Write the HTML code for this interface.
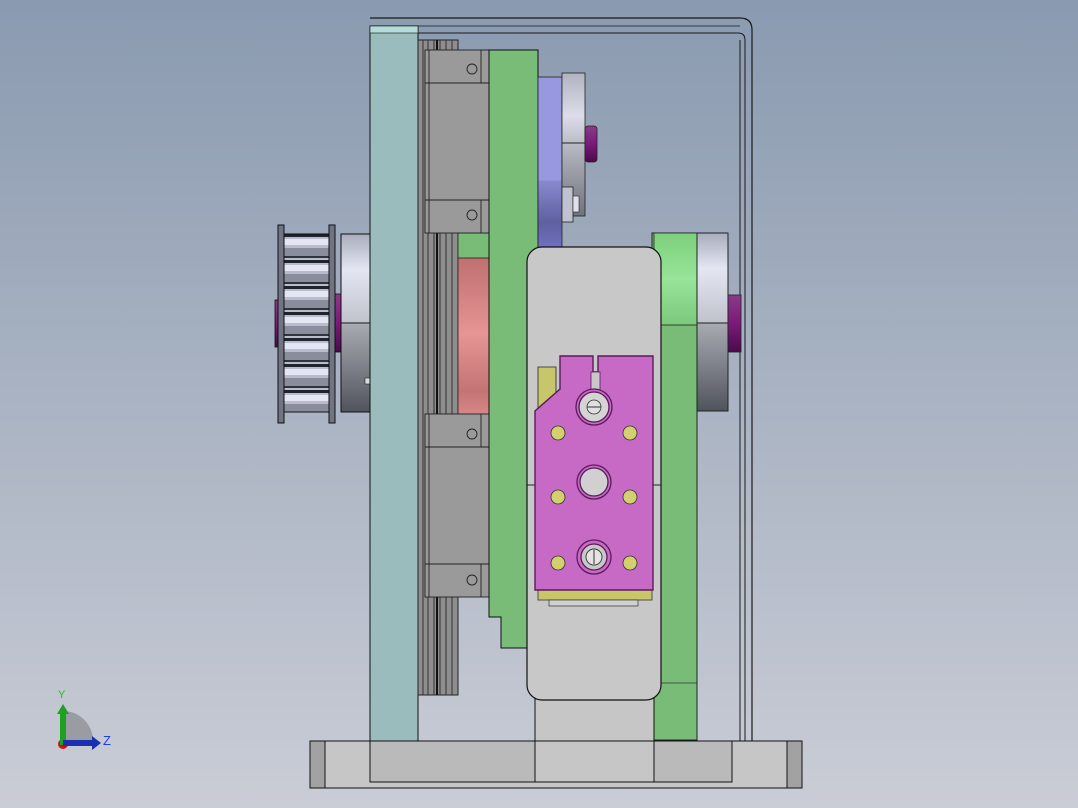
<!DOCTYPE html>
<html><head><style>html,body{margin:0;padding:0;width:1078px;height:808px;overflow:hidden}</style></head>
<body>
<svg width="1078" height="808" viewBox="0 0 1078 808" xmlns="http://www.w3.org/2000/svg" font-family="Liberation Sans, sans-serif">
<defs>
<linearGradient id="bg" x1="0" y1="0" x2="0" y2="1"><stop offset="0" stop-color="#8a9ab0"/><stop offset="1" stop-color="#cacdd6"/></linearGradient>
<linearGradient id="silv" x1="0" y1="0" x2="0" y2="1"><stop offset="0" stop-color="#a8acbc"/><stop offset="0.2" stop-color="#e4e6f2"/><stop offset="0.5" stop-color="#c0c2cc"/><stop offset="0.51" stop-color="#a8aab2"/><stop offset="1" stop-color="#50545c"/></linearGradient>
<linearGradient id="silv2" x1="0" y1="0" x2="0" y2="1"><stop offset="0" stop-color="#b0b2c0"/><stop offset="0.3" stop-color="#dcdde8"/><stop offset="0.6" stop-color="#a8aab4"/><stop offset="1" stop-color="#70747c"/></linearGradient>
<linearGradient id="red" x1="0" y1="0" x2="0" y2="1"><stop offset="0" stop-color="#c07070"/><stop offset="0.4" stop-color="#e69494"/><stop offset="0.7" stop-color="#c47474"/><stop offset="0.9" stop-color="#e49292"/><stop offset="0.92" stop-color="#9e6060"/><stop offset="1" stop-color="#9e6060"/></linearGradient>
<linearGradient id="blue" x1="0" y1="0" x2="0" y2="1"><stop offset="0" stop-color="#9898e0"/><stop offset="0.6" stop-color="#9898e0"/><stop offset="0.61" stop-color="#8888d0"/><stop offset="0.85" stop-color="#5e60a0"/><stop offset="1" stop-color="#7070c0"/></linearGradient>
<linearGradient id="purp" x1="0" y1="0" x2="0" y2="1"><stop offset="0" stop-color="#8a3a8a"/><stop offset="0.5" stop-color="#7a1a7a"/><stop offset="1" stop-color="#4a0a4a"/></linearGradient>
<linearGradient id="lgreen" x1="0" y1="0" x2="0" y2="1"><stop offset="0" stop-color="#7cd07c"/><stop offset="0.5" stop-color="#98e498"/><stop offset="1" stop-color="#7cc87c"/></linearGradient>
<pattern id="teeth" width="10" height="26" patternUnits="userSpaceOnUse" y="234"><rect width="10" height="26" fill="#b8bccc"/><rect y="0" width="10" height="3" fill="#20242c"/><rect y="5" width="10" height="6" fill="#e4e6f4"/><rect y="14" width="10" height="8" fill="#8a8e9c"/><rect y="22" width="10" height="2" fill="#30343c"/></pattern>
</defs>
<rect width="1078" height="808" fill="url(#bg)"/>
<!-- enclosure -->
<path d="M370 18 H740 Q752 18 752 30 V742" fill="none" stroke="#1a1a1a" stroke-width="1.2"/>
<path d="M370 33 H738 Q745 33 745 40 V742" fill="none" stroke="#1a1a1a" stroke-width="1"/>
<line x1="740" y1="40" x2="740" y2="742" stroke="#1a1a1a" stroke-width="1"/>
<line x1="370" y1="26" x2="740" y2="26" stroke="#1a1a1a" stroke-width="0.8"/>
<!-- left pulley -->
<rect x="275" y="300" width="4" height="47" fill="url(#purp)" stroke="#111" stroke-width="0.8"/>
<rect x="335" y="294" width="6" height="58" fill="url(#purp)" stroke="#111" stroke-width="0.8"/>
<rect x="284" y="234" width="45" height="178" fill="url(#teeth)" stroke="#111"/>
<rect x="278" y="225" width="6" height="198" fill="#707484" stroke="#111"/>
<rect x="329" y="225" width="6" height="198" fill="#707484" stroke="#111"/>
<rect x="341" y="234" width="30" height="178" fill="url(#silv)" stroke="#111"/>
<line x1="341" y1="323" x2="371" y2="323" stroke="#111"/>
<rect x="365" y="378" width="5" height="6" fill="#ddd" stroke="#222" stroke-width="0.6"/>
<!-- teal plate -->
<rect x="370" y="26" width="48" height="716" fill="#9bbcbc" stroke="#111"/>
<rect x="370" y="26" width="48" height="7" fill="#b4dcd8" stroke="#111" stroke-width="0.6"/>
<!-- rail -->
<rect x="418" y="40" width="40" height="655" fill="#8e8e8e" stroke="#222"/>
<g stroke="#333" stroke-width="1"><line x1="423" y1="40" x2="423" y2="695"/><line x1="428" y1="40" x2="428" y2="695"/><line x1="434" y1="40" x2="434" y2="695"/><line x1="440" y1="40" x2="440" y2="695"/><line x1="446" y1="40" x2="446" y2="695"/><line x1="452" y1="40" x2="452" y2="695"/></g>
<line x1="437" y1="40" x2="437" y2="695" stroke="#111" stroke-width="2"/>
<!-- green pieces behind -->
<rect x="458" y="233" width="32" height="26" fill="#78bc78" stroke="#222" stroke-width="0.8"/>
<rect x="484" y="50" width="6" height="33" fill="#78bc78" stroke="#222" stroke-width="0.8"/>
<!-- red cylinder -->
<rect x="458" y="258" width="31" height="190" fill="url(#red)" stroke="#222" stroke-width="0.8"/>
<!-- bearing blocks -->
<g fill="#9a9a9a" stroke="#222" stroke-width="0.9">
<rect x="425" y="50" width="64" height="183"/><line x1="425" y1="83" x2="489" y2="83"/><line x1="425" y1="200" x2="489" y2="200"/><line x1="481" y1="50" x2="481" y2="83"/><line x1="481" y1="200" x2="481" y2="233"/><line x1="429" y1="50" x2="429" y2="233"/>
<circle cx="472" cy="69" r="5" fill="none"/><circle cx="472" cy="215" r="5" fill="none"/>
<rect x="425" y="414" width="64" height="183"/><line x1="425" y1="447" x2="489" y2="447"/><line x1="425" y1="564" x2="489" y2="564"/><line x1="481" y1="414" x2="481" y2="447"/><line x1="481" y1="564" x2="481" y2="597"/><line x1="429" y1="414" x2="429" y2="597"/>
<circle cx="472" cy="434" r="5" fill="none"/><circle cx="472" cy="580" r="5" fill="none"/>
</g>
<!-- green plate -->
<path d="M489 50 H538 V648 H501 V617 H489 Z" fill="#78bc78" stroke="#111"/>
<!-- blue & silver -->
<rect x="538" y="77" width="24" height="171" fill="url(#blue)" stroke="#222" stroke-width="0.8"/>
<rect x="562" y="73" width="23" height="143" fill="url(#silv2)" stroke="#222" stroke-width="0.8"/>
<line x1="562" y1="143" x2="585" y2="143" stroke="#222"/>
<rect x="585" y="126" width="12" height="36" rx="3" fill="url(#purp)" stroke="#222" stroke-width="0.8"/>
<rect x="562" y="187" width="11" height="35" fill="#c0c2d0" stroke="#222" stroke-width="0.8"/>
<rect x="573" y="196" width="6" height="16" fill="#e0e0ea" stroke="#222" stroke-width="0.6"/>
<!-- right green / roller -->
<rect x="652" y="233" width="45" height="507" fill="#78bc78" stroke="#222"/>
<rect x="654" y="233" width="43" height="92" fill="url(#lgreen)" stroke="#222" stroke-width="0.8"/>
<line x1="652" y1="683" x2="697" y2="683" stroke="#333" stroke-width="0.8"/>
<rect x="697" y="233" width="31" height="178" fill="url(#silv)" stroke="#222"/>
<line x1="697" y1="323" x2="728" y2="323" stroke="#222"/>
<rect x="728" y="295" width="13" height="57" fill="url(#purp)" stroke="#222" stroke-width="0.8"/>
<!-- big light plate -->
<rect x="535" y="690" width="119" height="92" fill="#c6c6c6" stroke="#111"/>
<rect x="527" y="247" width="134" height="453" rx="15" fill="#c8c8c8" stroke="#111" stroke-width="1.2"/>
<line x1="527" y1="485" x2="535" y2="485" stroke="#222"/><line x1="653" y1="485" x2="661" y2="485" stroke="#222"/>
<!-- yellow parts -->
<path d="M538 367 H556 V410 H538 Z" fill="#c8c66a" stroke="#222" stroke-width="0.8"/>
<rect x="538" y="590" width="114" height="10" fill="#c8c66a" stroke="#333" stroke-width="0.8"/>
<rect x="549" y="600" width="89" height="6" fill="#d0d0d0" stroke="#333" stroke-width="0.7"/>
<!-- magenta plate -->
<path d="M560 356 H593 V372 H598 V356 H653 V590 H535 V411 L560 389 Z" fill="#c66ac6" stroke="#5a1a5a" stroke-width="1.4"/>
<rect x="591" y="372" width="9" height="20" fill="#c8c8c8" stroke="#5a1a5a" stroke-width="0.8"/>
<g stroke="#5a1a5a" stroke-width="1.3">
<circle cx="594" cy="407" r="18" fill="#c66ac6"/><circle cx="594" cy="407" r="15" fill="#d4d4d4"/>
<circle cx="594" cy="482" r="17" fill="#c66ac6"/><circle cx="594" cy="482" r="14" fill="#d0d0d0"/>
<circle cx="594" cy="557" r="17" fill="#c66ac6"/><circle cx="594" cy="557" r="13" fill="#c8c8c8"/>
</g>
<circle cx="594" cy="407" r="7" fill="#e0e0e0" stroke="#333" stroke-width="0.8"/><line x1="587" y1="407" x2="601" y2="407" stroke="#333"/>
<circle cx="594" cy="557" r="8" fill="#e4e4e4" stroke="#333" stroke-width="0.9"/><line x1="594" y1="550" x2="594" y2="564" stroke="#333"/>
<g fill="#d4d070" stroke="#333" stroke-width="0.8">
<circle cx="558" cy="433" r="7"/><circle cx="630" cy="433" r="7"/>
<circle cx="558" cy="497" r="7"/><circle cx="630" cy="497" r="7"/>
<circle cx="558" cy="563" r="7"/><circle cx="630" cy="563" r="7"/>
</g>
<!-- base -->
<rect x="310" y="741" width="492" height="47" fill="#c6c6c6" stroke="#111"/>
<rect x="310" y="741" width="15" height="47" fill="#a2a2a2" stroke="#111"/>
<rect x="787" y="741" width="15" height="47" fill="#a2a2a2" stroke="#111"/>
<rect x="370" y="741" width="362" height="41" fill="#bababa" stroke="#111"/>
<rect x="535" y="741" width="119" height="41" fill="#c6c6c6" stroke="#111"/>
<!-- triad -->
<path d="M63 745 V711 A30 30 0 0 1 93 741 Z" fill="#9a9ca4"/>
<circle cx="63" cy="744" r="5" fill="#d01010"/>
<rect x="60" y="712" width="6" height="33" fill="#20a020"/>
<path d="M57 714 L63 704 L69 714 Z" fill="#20a020"/>
<rect x="63" y="740" width="30" height="6" fill="#1a30b0"/>
<path d="M92 736 L101 743 L92 750 Z" fill="#1a30b0"/>
<text x="58" y="698" font-size="11" fill="#20c020">Y</text>
<text x="103" y="745" font-size="13" fill="#2040e0">Z</text>
</svg>
</body></html>
